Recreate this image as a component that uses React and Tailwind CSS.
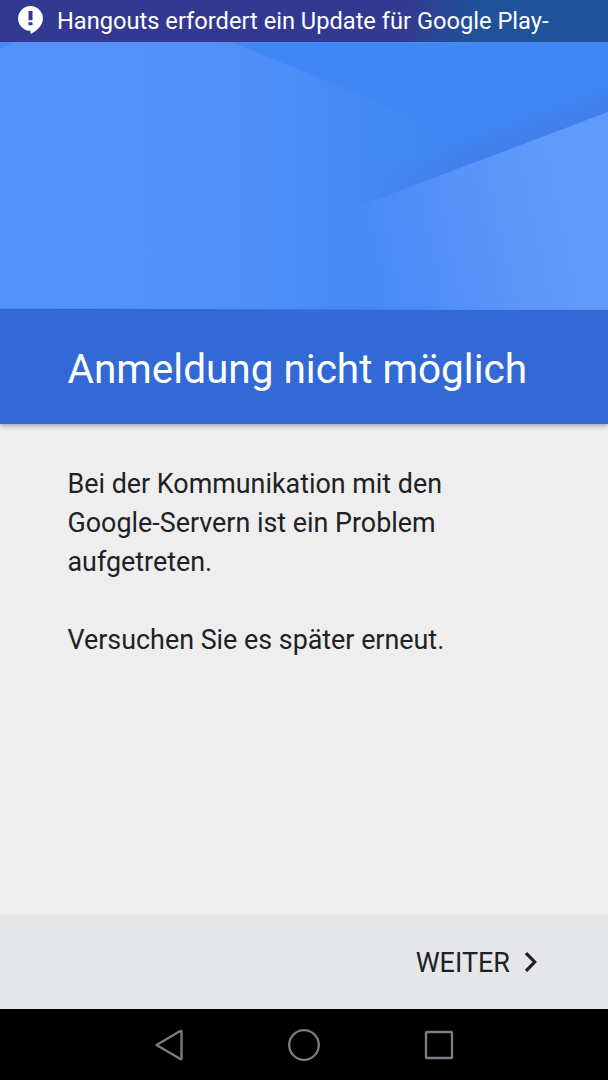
import React from "react";

const StatusBar = () => (
  <div className="flex h-[42px] shrink-0 items-start bg-[linear-gradient(100deg,#333990_0%,#333990_66%,#1f5299_78%,#1f5299_100%)] pl-[18px] text-white">
    <svg width="26" height="36" viewBox="0 0 26 36" className="shrink-0">
      <path
        d="M12.500 6a12.400 12.400 0 0 1 12.400 12.400c0 6.600-5.600 12.300-12.400 15.600v-3.200A12.400 12.400 0 0 1 12.500 6z"
        fill="#fff"
      />
      <path d="M10.500 11h4v9.300h-4zM10.500 22.300h4v3h-4z" fill="#333990" />
    </svg>
    <p className="ml-[13px] whitespace-nowrap text-[23.650px] leading-[42px]">
      Hangouts erfordert ein Update für Google Play-
    </p>
  </div>
);

const HeroArt = () => (
  <svg width="608" height="268" viewBox="0 42 608 268" className="block shrink-0">
    <defs>
      <linearGradient id="leftSheet" gradientUnits="userSpaceOnUse" x1="0" y1="0" x2="460" y2="0">
        <stop offset="0" stopColor="#5492f7" />
        <stop offset="0.460" stopColor="#5291f7" />
        <stop offset="0.620" stopColor="#4c8df6" />
        <stop offset="0.780" stopColor="#4589f5" />
        <stop offset="1" stopColor="#4086f5" />
      </linearGradient>
      <linearGradient id="rightSheet" gradientUnits="userSpaceOnUse" x1="335" y1="245" x2="560" y2="195">
        <stop offset="0" stopColor="#4789f4" stopOpacity="0" />
        <stop offset="0.200" stopColor="#4a8bf6" />
        <stop offset="0.450" stopColor="#5390f7" />
        <stop offset="0.750" stopColor="#5c97f9" />
        <stop offset="1" stopColor="#609bfa" />
      </linearGradient>
      <linearGradient id="foldShade" gradientUnits="userSpaceOnUse" x1="500" y1="153" x2="491" y2="129">
        <stop offset="0" stopColor="#437fea" />
        <stop offset="0.500" stopColor="#437fea" stopOpacity="0.500" />
        <stop offset="1" stopColor="#437fea" stopOpacity="0" />
      </linearGradient>
      <linearGradient id="shadeFade" gradientUnits="userSpaceOnUse" x1="370" y1="0" x2="470" y2="0">
        <stop offset="0" stopColor="#fff" stopOpacity="0" />
        <stop offset="1" stopColor="#fff" />
      </linearGradient>
      <mask id="shadeMask" maskUnits="userSpaceOnUse" x="0" y="42" width="608" height="268">
        <rect y="42" width="608" height="268" fill="url(#shadeFade)" />
      </mask>
    </defs>
    <rect y="42" width="608" height="268" fill="#4086f5" />
    <path d="M13 42H232L460 136V310H0V49z" fill="url(#leftSheet)" />
    <path d="M608 80L346 179V211L608 112z" fill="url(#foldShade)" mask="url(#shadeMask)" />
    <path d="M608 112L346 211L320 310H608z" fill="url(#rightSheet)" />
    <path d="M0 42.500H608" stroke="#5492f7" strokeOpacity="0.500" />
    <path d="M0 308.700L608 310.500H0z" fill="#3269d6" />
  </svg>
);

const NavBar = () => (
  <div className="flex h-[71px] shrink-0 items-center bg-black">
    <svg width="608" height="71" viewBox="0 1009 608 71" fill="none" stroke="#7d7c86" strokeWidth="2.300" strokeLinejoin="round">
      <path d="M156.500 1045L180.300 1031Q181.500 1030.500 181.500 1032V1058Q181.500 1059.500 180.300 1059z" />
      <circle cx="304" cy="1045" r="14.800" />
      <rect x="426" y="1032" width="26" height="26" rx="0.800" />
    </svg>
  </div>
);

const App = () => {
  return (
    <div className="flex h-[1080px] w-[608px] flex-col overflow-hidden bg-[#eeeeee] font-['Roboto',sans-serif] text-[#202124]">
      <StatusBar />
      <HeroArt />

      {/* Title */}
      <header className="flex h-[114px] shrink-0 items-center bg-[#3269d6] pl-[67.500px] pt-[3px] shadow-[0_2px_4px_rgba(0,0,0,0.3)]">
        <h1 className="whitespace-nowrap text-[40.500px] leading-[48px] text-white">
          Anmeldung nicht möglich
        </h1>
      </header>

      {/* Message */}
      <main className="flex-1 pl-[67.500px] pt-[41px] text-[26.860px] leading-[39px]">
        <p>
          Bei der Kommunikation mit den
          <br />
          Google-Servern ist ein Problem
          <br />
          aufgetreten.
        </p>
        <p className="mt-[39px]">Versuchen Sie es später erneut.</p>
      </main>

      {/* Footer action */}
      <footer className="flex h-[94px] shrink-0 items-center justify-end bg-[#e5e6e8] pr-[70px]">
        <button className="flex items-center text-[27px] leading-8">
          <span className="pt-px">WEITER</span>
          <svg width="14" height="22" viewBox="0 0 14 22" className="ml-[14px]" fill="none" stroke="#202124" strokeWidth="3.200">
            <path d="M2 2.200L10.700 11L2 19.800" />
          </svg>
        </button>
      </footer>

      <NavBar />
    </div>
  );
};

export default App;
